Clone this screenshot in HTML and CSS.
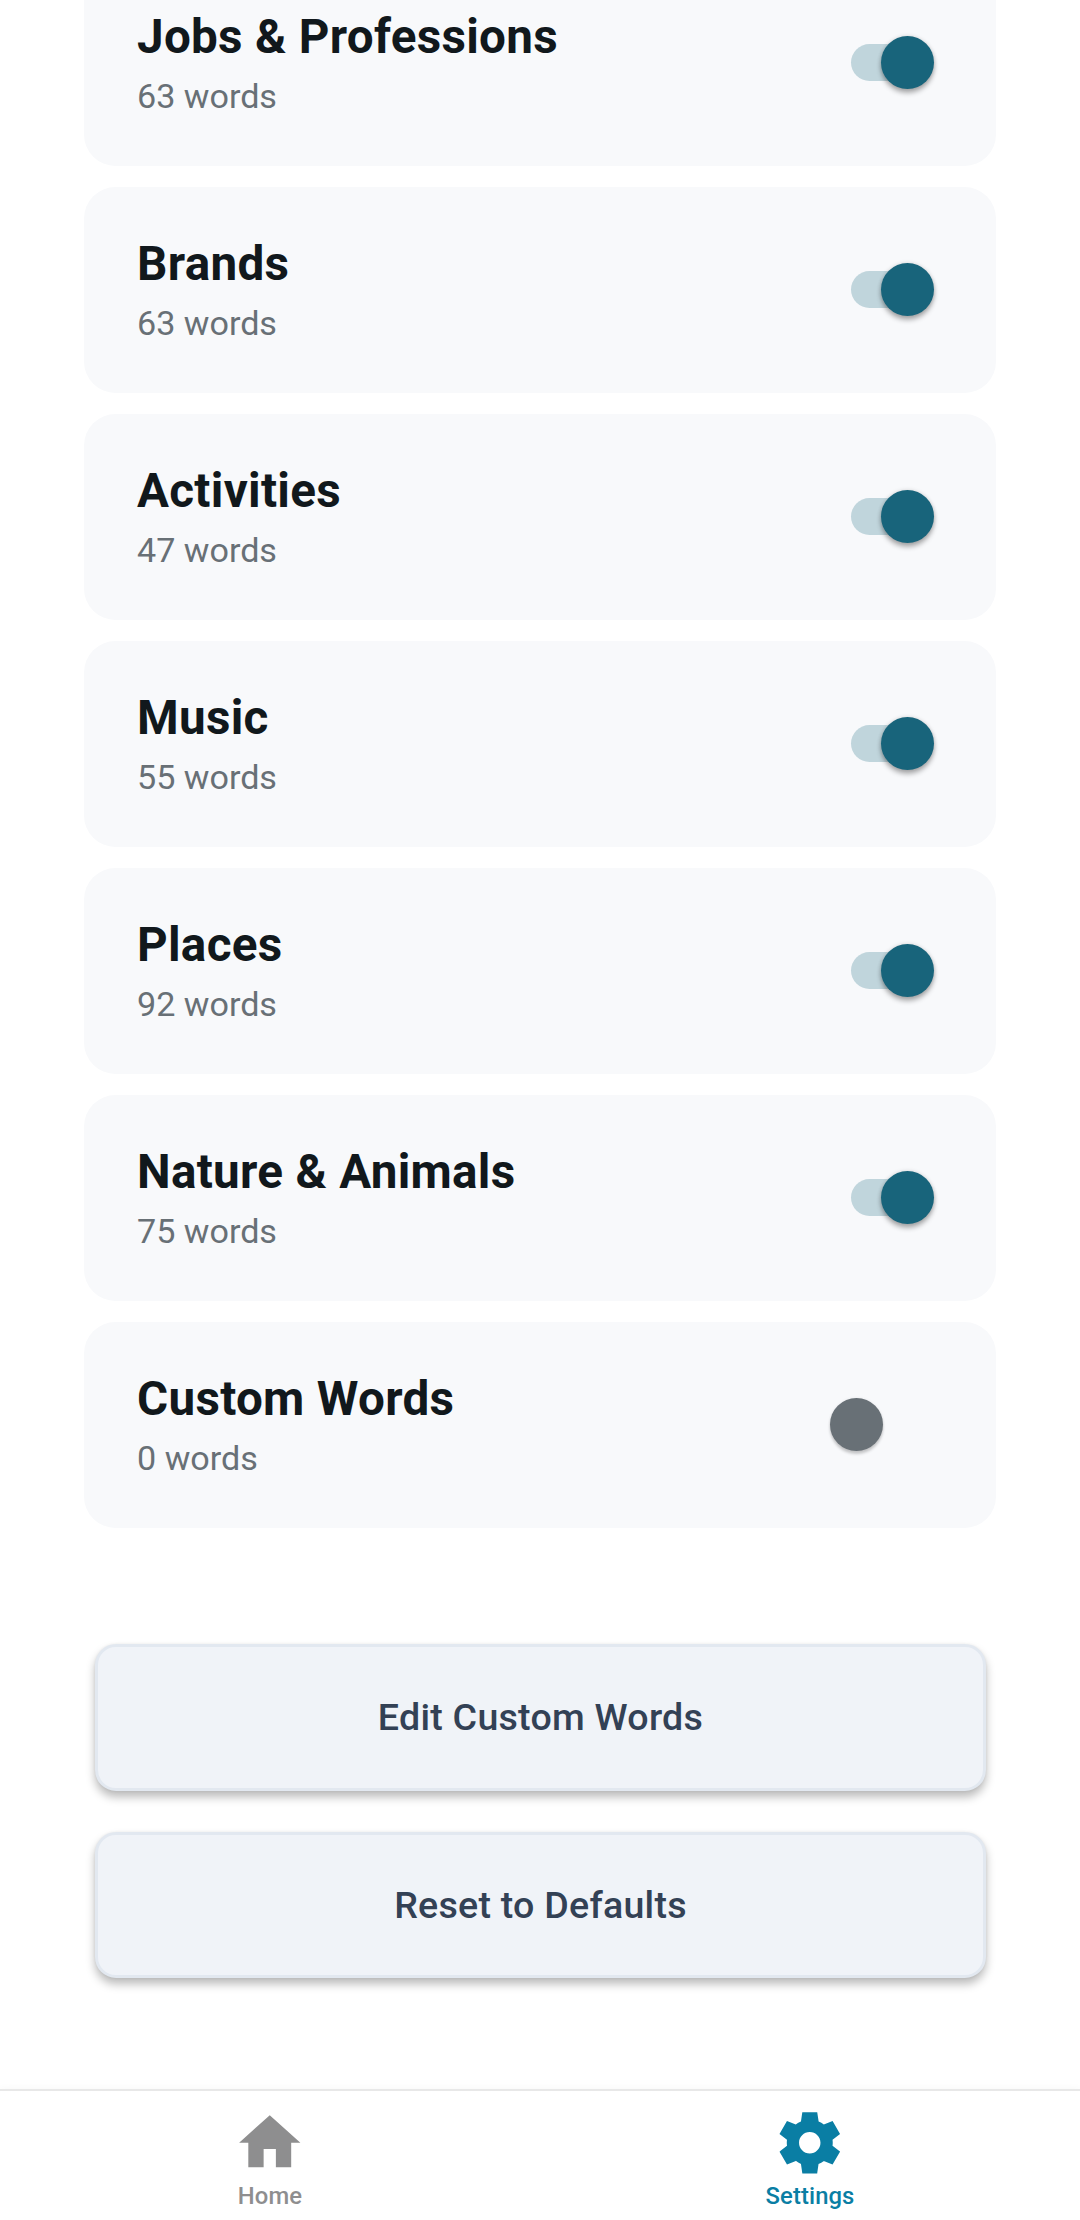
FILE: index.html
```html
<!DOCTYPE html>
<html lang="en">
<head>
<meta charset="utf-8">
<title>Settings</title>
<link rel="stylesheet" href="styles.css">
</head>
<body>
<div class="app">
  <main class="content">
    <section class="categories">
      <article class="card"><div class="info"><h2 class="title">Jobs &amp; Professions</h2><p class="count">63 words</p></div><div class="switch on"></div></article>
      <article class="card"><div class="info"><h2 class="title">Brands</h2><p class="count">63 words</p></div><div class="switch on"></div></article>
      <article class="card"><div class="info"><h2 class="title">Activities</h2><p class="count">47 words</p></div><div class="switch on"></div></article>
      <article class="card"><div class="info"><h2 class="title">Music</h2><p class="count">55 words</p></div><div class="switch on"></div></article>
      <article class="card"><div class="info"><h2 class="title">Places</h2><p class="count">92 words</p></div><div class="switch on"></div></article>
      <article class="card"><div class="info"><h2 class="title">Nature &amp; Animals</h2><p class="count">75 words</p></div><div class="switch on"></div></article>
      <article class="card"><div class="info"><h2 class="title">Custom Words</h2><p class="count">0 words</p></div><div class="switch"></div></article>
    </section>
    <section class="actions">
      <button class="button">Edit Custom Words</button>
      <button class="button">Reset to Defaults</button>
    </section>
  </main>
  <nav class="tabs">
    <a class="tab">
      <svg class="icon" viewBox="0 0 24 24"><path fill="currentColor" d="M10 20v-6h4v6h5v-8h3L12 3 2 12h3v8z"/></svg>
      <span>Home</span>
    </a>
    <a class="tab active">
      <svg class="icon" viewBox="0 0 24 24"><path fill="currentColor" d="M19.44 12.99l-.01.02c.04-.33.08-.67.08-1.01 0-.34-.03-.66-.07-.99l.01.02 2.44-1.92-2.43-4.22-2.87 1.16.01.01c-.52-.4-1.09-.74-1.71-1h.01L14.44 2H9.57l-.44 3.07h.01c-.62.26-1.19.6-1.71 1l.01-.01-2.88-1.17-2.44 4.22 2.44 1.92.01-.02c-.04.33-.07.65-.07.99 0 .34.03.68.08 1.01l-.01-.02-2.1 1.65-.33.26 2.43 4.2 2.88-1.15-.02-.04c.53.41 1.1.75 1.73 1.01h-.03L9.58 22h4.85s.03-.18.06-.42l.38-2.65h-.01c.62-.26 1.2-.6 1.73-1.01l-.02.04 2.88 1.15 2.43-4.2s-.14-.12-.33-.26l-2.11-1.66zM12 15.5c-1.93 0-3.5-1.57-3.5-3.5s1.57-3.5 3.5-3.5 3.5 1.57 3.5 3.5-1.57 3.5-3.5 3.5z"/></svg>
      <span>Settings</span>
    </a>
  </nav>
</div>
</body>
</html>
```
FILE: styles.css
```css
* { box-sizing: border-box; }

body {
  margin: 0;
  background: #fff;
  font-family: Roboto, "Liberation Sans", sans-serif;
}

.app {
  display: flex;
  flex-direction: column;
  width: 1080px;
  height: 2220px;
  overflow: hidden;
}

.content {
  flex: 1;
  min-height: 0;
  padding: 0 84px;
}

/* The list is scrolled: its first card starts above the viewport. */
.categories {
  display: flex;
  flex-direction: column;
  gap: 21px;
  margin-top: -40px;
}

.card {
  display: flex;
  justify-content: space-between;
  align-items: flex-start;
  height: 206px;
  padding: 46px 62px 0 53px;
  border-radius: 31.5px;
  background: #f8f9fb;
}

.title {
  margin: 0;
  font-size: 47.6px;
  line-height: 63px;
  font-weight: 700;
  letter-spacing: 0.3px;
  color: #11181c;
}

.count {
  margin: 1px 0 0;
  font-size: 34.125px;
  line-height: 52px;
  color: #687076;
}

.switch {
  position: relative;
  width: 104px;
  height: 53px;
  margin-top: 30px;
}

.switch::after {
  content: "";
  position: absolute;
  top: 0;
  left: 0;
  width: 53px;
  height: 53px;
  border-radius: 50%;
  background: #687076;
  box-shadow: 0 3px 3px rgba(0, 0, 0, 0.2), 0 0 3px rgba(0, 0, 0, 0.08);
}

.switch.on::before {
  content: "";
  position: absolute;
  top: 8px;
  left: 21px;
  width: 75px;
  height: 37px;
  border-radius: 19px;
  background: #c0d5dc;
}

.switch.on::after {
  left: 51px;
  background: #18647b;
  box-shadow: 0 4px 5px rgba(0, 0, 0, 0.3), 0 0 4px rgba(0, 0, 0, 0.14);
}

.actions {
  display: flex;
  flex-direction: column;
  gap: 41px;
  margin-top: 116px;
  padding: 0 10px 0 11px;
}

.button {
  height: 147px;
  padding: 0;
  border: 3px solid #e2e8f0;
  border-radius: 21px;
  background: #f0f3f8;
  box-shadow: 0 6px 10px rgba(0, 0, 0, 0.27), 0 0 3px rgba(0, 0, 0, 0.06);
  font: 500 37.6px/1 Roboto, "Liberation Sans", sans-serif;
  letter-spacing: 0.25px;
  color: #334155;
}

.button:last-child {
  height: 146px;
  padding-top: 1px;
}

.tabs {
  display: flex;
  height: 131px;
  padding-top: 15px;
  border-top: 2px solid #e8e8e8;
  background: #fff;
  box-shadow: 0 0 8px rgba(0, 0, 0, 0.04);
}

.tab {
  flex: 1;
  display: flex;
  flex-direction: column;
  align-items: center;
  font-size: 23.8px;
  line-height: 32px;
  font-weight: 500;
  letter-spacing: 0.1px;
  color: #8e8e8f;
}

.tab.active { color: #0a7ea4; }

.icon {
  display: block;
  width: 73.5px;
  height: 73.5px;
}
```
